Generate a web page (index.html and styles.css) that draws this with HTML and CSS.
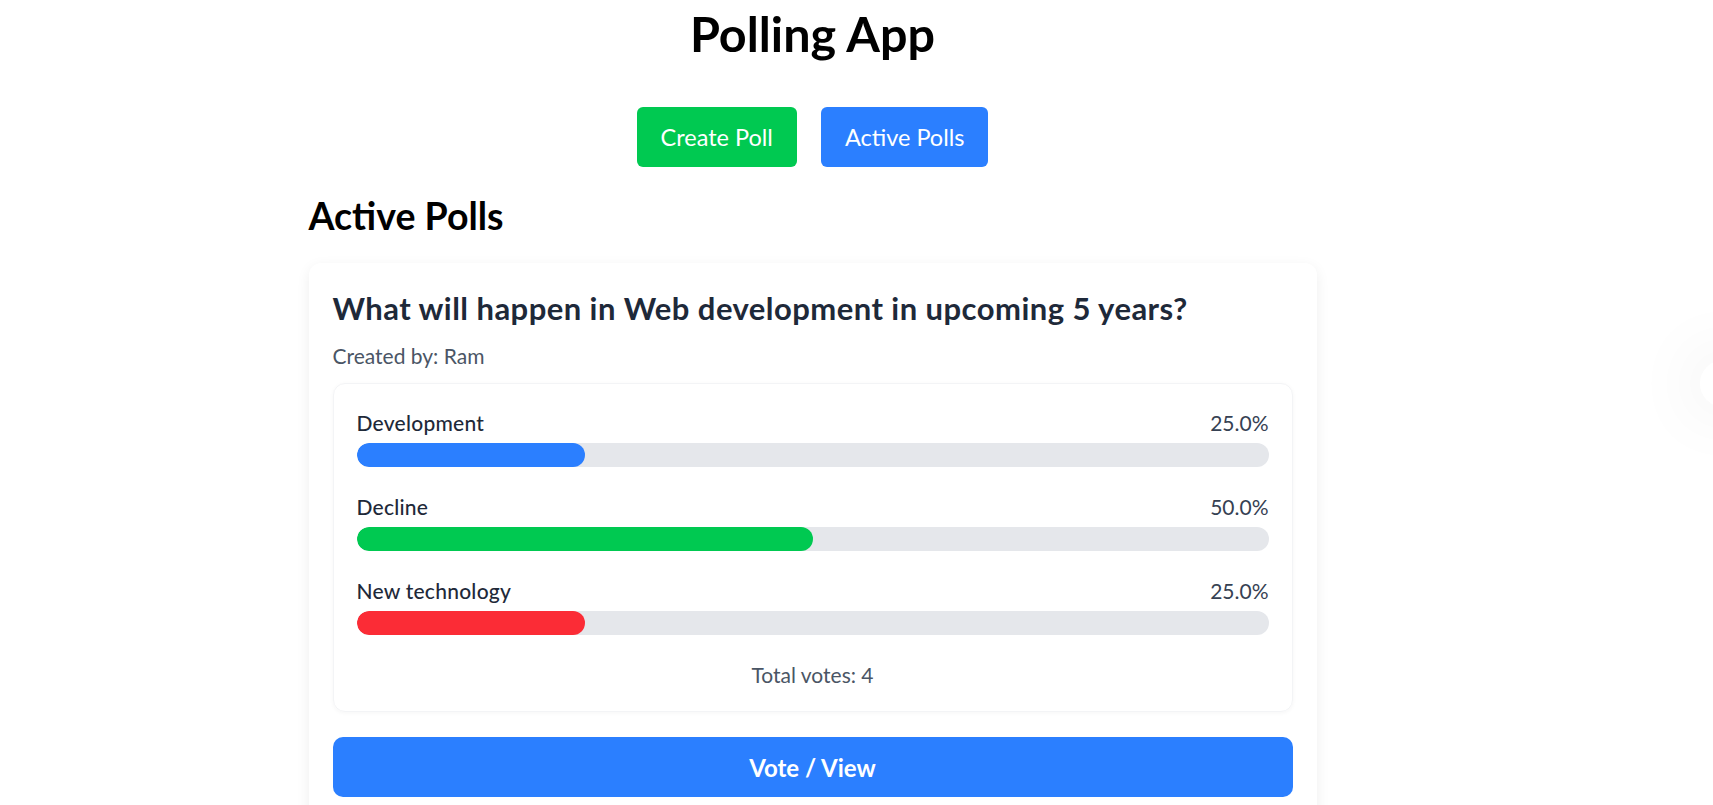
FILE: index.html
```html
<!DOCTYPE html>
<html lang="en">
<head>
<meta charset="utf-8">
<title>Polling App</title>
<link rel="stylesheet" href="styles.css">
</head>
<body>
<div class="page">
  <h1 class="app-title">Polling App</h1>
  <nav class="nav">
    <button class="btn btn-green">Create Poll</button>
    <button class="btn btn-blue">Active Polls</button>
  </nav>
  <main class="content">
    <h2 class="section-title">Active Polls</h2>
    <article class="card">
      <h3 class="question">What will happen in Web development in upcoming 5 years?</h3>
      <p class="author">Created by: Ram</p>
      <div class="results">
        <div class="option">
          <div class="option-head"><span class="option-label">Development</span><span class="option-pct">25.0%</span></div>
          <div class="track"><div class="fill fill-blue" style="width:25%"></div></div>
        </div>
        <div class="option">
          <div class="option-head"><span class="option-label">Decline</span><span class="option-pct">50.0%</span></div>
          <div class="track"><div class="fill fill-green" style="width:50%"></div></div>
        </div>
        <div class="option">
          <div class="option-head"><span class="option-label">New technology</span><span class="option-pct">25.0%</span></div>
          <div class="track"><div class="fill fill-red" style="width:25%"></div></div>
        </div>
        <p class="total">Total votes: 4</p>
      </div>
      <button class="vote-btn">Vote / View</button>
    </article>
  </main>
</div>
<div class="floating-dot"></div>
</body>
</html>
```
FILE: styles.css
```css
html {
  scrollbar-width: none;
}
body {
  margin: 0;
  background: #ffffff;
  font-family: "Lato", "Liberation Sans", sans-serif;
  color: #000;
}
.page {
  padding-right: 88px;
  box-sizing: border-box;
  width: 100%;
}
.app-title {
  margin: 6px 0 0;
  text-align: center;
  font-size: 48.5px;
  line-height: 55px;
  font-weight: 700;
}
.nav {
  display: flex;
  justify-content: center;
  gap: 24px;
  margin-top: 46px;
}
.btn {
  font-family: inherit;
  font-size: 23.5px;
  line-height: 36px;
  padding: 12px 24px;
  border: none;
  border-radius: 6px;
  color: #fff;
  cursor: pointer;
}
.btn-green { background: #00c951; }
.btn-blue { background: #2b7fff; }
.content {
  width: 1008px;
  margin: 0 auto;
}
.section-title {
  margin: 26px 0 24px;
  font-size: 37.5px;
  line-height: 46px;
  font-weight: 700;
}
.card {
  background: #fff;
  border-radius: 12px;
  padding: 24px;
  box-shadow: 0 4px 14px rgba(0, 0, 0, 0.07);
}
.question {
  margin: 0;
  font-size: 31px;
  letter-spacing: 0.45px;
  line-height: 43px;
  font-weight: 700;
  color: #1e2939;
}
.author {
  margin: 11px 0 0;
  font-size: 21px;
  line-height: 30px;
  color: #4a5565;
}
.results {
  margin-top: 12px;
  border: 1px solid #f3f4f6;
  border-radius: 12px;
  padding: 24px 23px 21px;
  box-shadow: 0 1px 4px rgba(0, 0, 0, 0.04);
  display: flex;
  flex-direction: column;
  gap: 25px;
}
.option-head {
  display: flex;
  justify-content: space-between;
  font-size: 21px;
  line-height: 30px;
  margin-bottom: 5px;
}
.option-label {
  color: #1e2939;
  font-weight: 500;
  letter-spacing: 0.25px;
}
.option-pct {
  color: #364153;
}
.track {
  height: 24px;
  background: #e5e7eb;
  border-radius: 12px;
  overflow: hidden;
}
.fill {
  height: 100%;
  border-radius: 12px;
}
.fill-blue { background: #2b7fff; }
.fill-green { background: #00c951; }
.fill-red { background: #fb2c36; }
.total {
  margin: 0;
  text-align: center;
  font-size: 21px;
  line-height: 30px;
  color: #4a5565;
}
.vote-btn {
  display: block;
  width: 100%;
  margin-top: 25px;
  height: 60px;
  border: none;
  border-radius: 10px;
  background: #2b7fff;
  color: #fff;
  font-family: inherit;
  font-size: 24px;
  font-weight: 700;
  cursor: pointer;
}
.floating-dot {
  position: fixed;
  right: -34px;
  top: 360px;
  width: 47px;
  height: 47px;
  border-radius: 50%;
  background: #fff;
  box-shadow: 0 0 70px 10px rgba(0, 0, 0, 0.06);
}
```
